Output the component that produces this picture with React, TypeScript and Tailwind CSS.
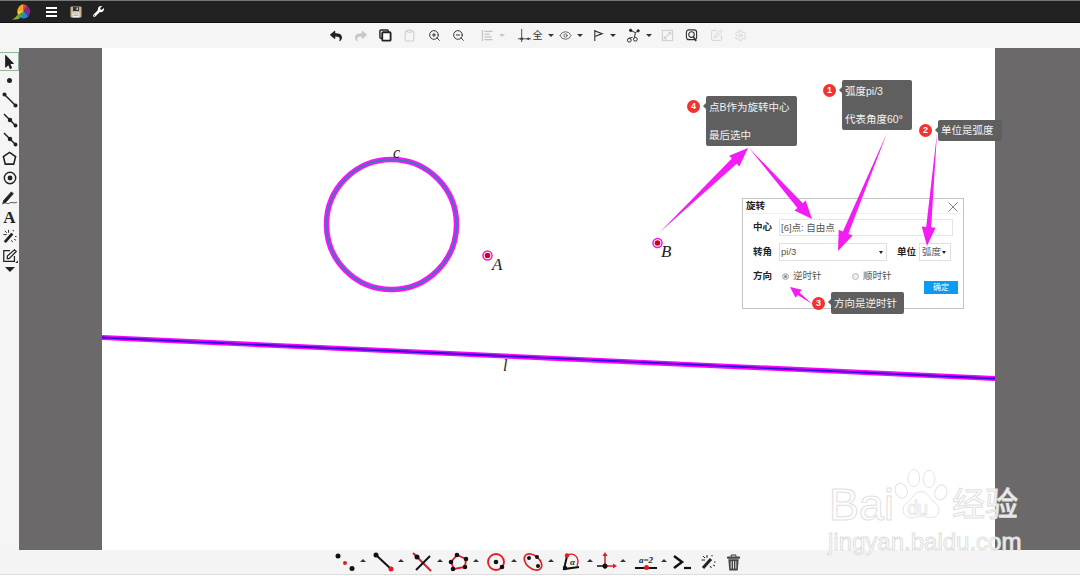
import React from "react";
import { FaReply, FaShare, FaWrench, FaMousePointer } from "react-icons/fa";
import { ZoomIn, ZoomOut, Eye, Settings, Clipboard, SquarePen } from "lucide-react";

const CJK = "font-['Liberation_Sans','Noto_Sans_CJK_SC',sans-serif]";
const MATH = "font-['Liberation_Serif',serif] italic";

function Caret({ tiny, color = "border-t-[#333]" }: { tiny?: boolean; color?: string }) {
  return (
    <span
      className={`inline-block w-0 h-0 border-x-[3px] border-x-transparent border-t-[3px] ${color} ${
        tiny ? "rotate-180" : ""
      }`}
    />
  );
}

// ---- top toolbar ----
const ic = "w-[13px] h-[13px]";

function CopyIcon() {
  return (
    <svg viewBox="0 0 14 14" className={ic}>
      <rect x="1" y="1" width="9" height="9" rx="1" fill="none" stroke="#222" strokeWidth="1.5" />
      <rect x="3.5" y="3.5" width="9" height="9" rx="1" fill="#fff" stroke="#222" strokeWidth="2" />
    </svg>
  );
}
function AlignIcon() {
  return (
    <svg viewBox="0 0 14 14" className={ic} stroke="#c4c4c4" strokeWidth="1.3">
      <path d="M1.5 1v12M3.5 2.5h9M3.5 5.500h6M3.5 8.500h8M3.500 11.500h9" fill="none" />
    </svg>
  );
}
function AxesIcon() {
  return (
    <svg viewBox="0 0 16 16" className="w-[15px] h-[15px]" stroke="#444" strokeWidth="1" fill="#444">
      <path d="M5 1v14M1 11.500h14" fill="none" />
      <circle cx="5" cy="11.500" r="1.200" />
      <circle cx="12" cy="11.500" r="0.900" />
    </svg>
  );
}
function FlagIcon() {
  return (
    <svg viewBox="0 0 14 14" className={ic} fill="none" stroke="#333" strokeWidth="1.2">
      <path d="M3 1v12M3 2l8 3-8 3" />
    </svg>
  );
}
function GraphIcon() {
  return (
    <svg viewBox="0 0 16 16" className="w-[15px] h-[15px]" fill="none" stroke="#222" strokeWidth="1">
      <path d="M5 2.500l5 2.500 3-2M10 5l-1 5M3 11l4-1" />
      <circle cx="5" cy="2.500" r="1.300" fill="#222" />
      <circle cx="13" cy="3" r="1.200" fill="#222" />
      <circle cx="3.500" cy="13" r="2" />
      <circle cx="10" cy="12" r="2" />
    </svg>
  );
}
function ExpandIcon() {
  return (
    <svg viewBox="0 0 14 14" className={ic} fill="none" stroke="#d0d0d0" strokeWidth="1.2">
      <rect x="1.500" y="1.500" width="11" height="11" />
      <path d="M4 10l6-6M7.500 3.500H10.500V6.500M3.500 7.500V10.500H6.500" />
    </svg>
  );
}
function CameraIcon() {
  return (
    <svg viewBox="0 0 14 14" className={ic} fill="none" stroke="#333" strokeWidth="1.200">
      <rect x="1.500" y="1" width="11" height="10.500" rx="2.500" />
      <circle cx="7" cy="6" r="3" />
      <path d="M9 8.500l3 4.500" strokeWidth="1.600" />
    </svg>
  );
}

type TopItem = { w: string; node: React.ReactNode; caret?: string };
const topItems: TopItem[] = [
  { w: "w-[24.5px]", node: <FaReply className="w-[12px] h-[12px] text-[#222]" /> },
  { w: "w-[24.5px]", node: <FaShare className="w-[12px] h-[12px] text-[#c8c8c8]" /> },
  { w: "w-[24.5px]", node: <CopyIcon /> },
  { w: "w-[24.5px]", node: <Clipboard className={`${ic} text-[#cfcfcf]`} strokeWidth={2} /> },
  { w: "w-[24.5px]", node: <ZoomIn className={`${ic} text-[#333]`} strokeWidth={1.8} /> },
  { w: "w-[24.5px]", node: <ZoomOut className={`${ic} text-[#333]`} strokeWidth={1.8} /> },
  { w: "w-[43px]", node: <AlignIcon />, caret: "border-t-[#c8c8c8]" },
  {
    w: "w-[42px]",
    node: (
      <span className="flex items-center">
        <AxesIcon />
        <span className={`${CJK} text-[10px] leading-none text-[#333] ml-[1px]`}>全</span>
      </span>
    ),
  },
  { w: "w-[30px]", node: <Eye className={`${ic} text-[#555]`} strokeWidth={1.6} />, caret: "border-t-[#333]" },
  { w: "w-[36px]", node: <FlagIcon />, caret: "border-t-[#333]" },
  { w: "w-[33px]", node: <GraphIcon />, caret: "border-t-[#333]" },
  { w: "w-[24.5px]", node: <ExpandIcon /> },
  { w: "w-[24.5px]", node: <CameraIcon /> },
  { w: "w-[24.5px]", node: <SquarePen className={`${ic} text-[#d0d0d0]`} strokeWidth={1.6} /> },
  { w: "w-[24.5px]", node: <Settings className={`${ic} text-[#d0d0d0]`} strokeWidth={1.6} /> },
];

// ---- left tools ----
function SegIcon() {
  return (
    <svg viewBox="0 0 16 16" className="w-[16px] h-[16px]" fill="#222" stroke="#222" strokeWidth="1.500">
      <path d="M2 2l12 12" />
      <circle cx="2.500" cy="2.500" r="1.300" />
      <circle cx="13.500" cy="13.500" r="1.300" />
    </svg>
  );
}
function SegMidIcon() {
  return (
    <svg viewBox="0 0 16 16" className="w-[16px] h-[16px]" fill="#222" stroke="#222" strokeWidth="1.500">
      <path d="M2 2l12 12" />
      <circle cx="8" cy="8" r="1.500" />
      <circle cx="13.500" cy="13.500" r="1.200" />
    </svg>
  );
}
function PentagonIcon({ className = "w-[15px] h-[15px]" }: { className?: string }) {
  return (
    <svg viewBox="0 0 16 16" className={className} fill="none" stroke="#222" strokeWidth="1.700">
      <path d="M8 1.500L14.500 6 12.500 14H3.500L1.500 6z" />
    </svg>
  );
}
function CircleDotIcon() {
  return (
    <svg viewBox="0 0 16 16" className="w-[14px] h-[14px]" fill="none" stroke="#222" strokeWidth="1.600">
      <circle cx="8" cy="8" r="6.500" />
      <circle cx="8" cy="8" r="2" fill="#222" />
    </svg>
  );
}
function PenIcon() {
  return (
    <svg viewBox="0 0 18 16" className="w-[17px] h-[15px]" fill="none" stroke="#222">
      <path d="M3 11L11 2l2 2-8 9-3 1z" fill="#222" />
      <path d="M1 15c4-3 6 1 8-1s5 1 8-1" strokeWidth="0.800" />
    </svg>
  );
}
function WandIcon({ className = "w-[15px] h-[15px]" }: { className?: string }) {
  return (
    <svg viewBox="0 0 16 16" className={className} stroke="#222" fill="none">
      <path d="M3 14L11 5" strokeWidth="3" />
      <path d="M7 1v3M1.500 6H5M3 2l2 2M12 1v1.500M14 8h1.500M10 12l1.500 2M13 11l2 1" strokeWidth="1" />
    </svg>
  );
}
function NoteIcon() {
  return (
    <svg viewBox="0 0 18 18" className="w-[16px] h-[16px]" fill="none" stroke="#222" strokeWidth="1.400">
      <path d="M9 3H2v12h12V9" />
      <path d="M6 12V9l8-7 2 2-8 8z" />
      <path d="M15 17l3-3v3z" fill="#222" stroke="none" />
    </svg>
  );
}

const leftTools: React.ReactNode[] = [
  <span className="w-[5px] h-[5px] rounded-full bg-[#222]" />,
  <SegIcon />,
  <SegMidIcon />,
  <SegMidIcon />,
  <PentagonIcon />,
  <CircleDotIcon />,
  <PenIcon />,
  <span className="font-['Liberation_Serif',serif] font-bold text-[17px] leading-none text-[#222]">A</span>,
  <WandIcon />,
  <NoteIcon />,
];

// ---- bottom tools ----
function B({ children }: { children: React.ReactNode }) {
  return (
    <svg viewBox="0 0 24 20" className="w-[24px] h-[20px]">
      {children}
    </svg>
  );
}
const RED = "#e01b24";
const K = "#111";
const bottomItems: { w: string; node: React.ReactNode; caret?: boolean }[] = [
  {
    w: "w-[38px]",
    caret: true,
    node: (
      <B>
        <circle cx="5" cy="4" r="2.500" fill={K} />
        <circle cx="12" cy="11" r="2" fill={RED} />
        <circle cx="19" cy="16.500" r="2.500" fill={K} />
      </B>
    ),
  },
  {
    w: "w-[39px]",
    caret: true,
    node: (
      <B>
        <path d="M5 3l15 14" stroke={K} strokeWidth="2" />
        <circle cx="5" cy="3" r="2.500" fill={K} />
        <circle cx="20" cy="17" r="2.500" fill={RED} />
      </B>
    ),
  },
  {
    w: "w-[36px]",
    caret: true,
    node: (
      <B>
        <path d="M3 1l18 18" stroke={RED} strokeWidth="2" />
        <path d="M20 4L6 18" stroke={K} strokeWidth="2" />
        <circle cx="7" cy="5" r="2.500" fill={K} />
      </B>
    ),
  },
  {
    w: "w-[38px]",
    caret: true,
    node: (
      <B>
        <path d="M11 3l9 4-1 8-11 2-3-7z" fill="none" stroke={RED} strokeWidth="1.800" />
        <circle cx="11" cy="3" r="2.300" fill={K} />
        <circle cx="20" cy="7" r="2.300" fill={K} />
        <circle cx="19" cy="15" r="2.300" fill={K} />
        <circle cx="7" cy="17" r="2.300" fill={K} />
        <circle cx="5" cy="10" r="2.300" fill={K} />
      </B>
    ),
  },
  {
    w: "w-[37px]",
    caret: true,
    node: (
      <B>
        <circle cx="12" cy="10" r="8" fill="none" stroke={RED} strokeWidth="1.800" />
        <circle cx="12" cy="10" r="2.300" fill={K} />
        <circle cx="18" cy="15" r="2.300" fill={K} />
      </B>
    ),
  },
  {
    w: "w-[39px]",
    caret: true,
    node: (
      <B>
        <ellipse cx="12" cy="10" rx="10" ry="6.500" transform="rotate(40 12 10)" fill="none" stroke={RED} strokeWidth="1.600" />
        <circle cx="8" cy="6" r="2" fill={K} />
        <circle cx="16" cy="5" r="2" fill={K} />
        <circle cx="17" cy="14" r="2" fill={K} />
      </B>
    ),
  },
  {
    w: "w-[33px]",
    caret: true,
    node: (
      <B>
        <path d="M7 4l-3 13 15-2" fill="none" stroke={K} strokeWidth="2" />
        <path d="M7 3c8-3 13 3 10 11" fill="none" stroke={RED} strokeWidth="1.300" />
        <circle cx="7" cy="3.500" r="2.200" fill={RED} />
        <circle cx="5" cy="16" r="2.200" fill={K} />
        <text x="10" y="13" fontSize="9" fontStyle="italic" fontWeight="bold" fontFamily="Liberation Serif, serif" fill="#222">
          α
        </text>
      </B>
    ),
  },
  {
    w: "w-[41px]",
    caret: true,
    node: (
      <B>
        <path d="M12 2v15M12 14h10" stroke={RED} strokeWidth="1.500" />
        <path d="M12 0l-2.500 4h5zM24 14l-4-2.500v5z" fill={RED} />
        <path d="M4 14h8" stroke={K} strokeWidth="1.500" />
        <circle cx="12" cy="14" r="2.500" fill={K} />
      </B>
    ),
  },
  {
    w: "w-[37px]",
    caret: true,
    node: (
      <span className="flex flex-col items-center w-[24px] relative">
        <span className="font-['Liberation_Serif',serif] italic font-bold text-[9px] leading-[9px] text-[#222]">a=2</span>
        <span className="mt-[2px] w-[22px] h-[2px] bg-[#111]" />
        <span className="absolute left-[9.500px] top-[9px] w-[5px] h-[5px] rounded-full bg-[#e01b24]" />
      </span>
    ),
  },
  {
    w: "w-[25px]",
    node: (
      <B>
        <path d="M3 4l8 6-8 6" fill="none" stroke={K} strokeWidth="2.500" />
        <path d="M13 16h7" stroke={K} strokeWidth="2.200" />
      </B>
    ),
  },
  {
    w: "w-[25px]",
    node: <WandIcon className="w-[16px] h-[16px]" />,
  },
  {
    w: "w-[25px]",
    node: (
      <svg viewBox="0 0 16 18" className="w-[15px] h-[17px]">
        <path d="M5.500 2.500V1h5v1.500" fill="none" stroke="#222" />
        <rect x="1" y="2.500" width="14" height="2.500" rx="1" fill="#444" />
        <path d="M2.500 5.500h11l-1 12h-9z" fill="#444" />
        <path d="M5.500 7.500v8M8 7.500v8M10.500 7.500v8" stroke="#eee" strokeWidth="1" />
      </svg>
    ),
  },
];

// ---- canvas ----
function arrowPoints(x1: number, y1: number, x2: number, y2: number, shaft: number, headLen: number, headW: number) {
  const d = Math.hypot(x2 - x1, y2 - y1);
  const ux = (x2 - x1) / d;
  const uy = (y2 - y1) / d;
  const nx = -uy;
  const ny = ux;
  const bx = x2 - ux * headLen;
  const by = y2 - uy * headLen;
  const p = (x: number, y: number) => `${x.toFixed(1)},${y.toFixed(1)}`;
  return [
    p(x1, y1),
    p(bx + (nx * shaft) / 2, by + (ny * shaft) / 2),
    p(bx + (nx * headW) / 2, by + (ny * headW) / 2),
    p(x2, y2),
    p(bx - (nx * headW) / 2, by - (ny * headW) / 2),
    p(bx - (nx * shaft) / 2, by - (ny * shaft) / 2),
  ].join(" ");
}

const arrows = [
  [660, 232, 748, 148, 7, 19, 15],
  [749, 148, 812, 219, 7, 18, 15],
  [887, 133, 838, 251, 6, 20, 15],
  [937, 133, 927, 246, 5, 19, 14],
  [812, 304, 790, 287, 3, 11, 10],
];

function Badge({ n, className }: { n: number; className: string }) {
  return (
    <span
      className={`absolute w-[13px] h-[13px] rounded-full bg-[#f5302f] text-white text-[9px] font-bold leading-[13px] text-center font-['Liberation_Sans',sans-serif] ${className}`}
    >
      {n}
    </span>
  );
}

function Callout({ className, children }: { className: string; children: React.ReactNode }) {
  return (
    <div className={`absolute rounded-[2px] bg-[#5f5f5f] text-[#f2f2f2] text-[10.500px] px-[3px] whitespace-nowrap ${CJK} ${className}`}>
      <span className="absolute left-[-3px] top-[7px] w-0 h-0 border-y-[3px] border-y-transparent border-r-[3px] border-r-[#5f5f5f]" />
      {children}
    </div>
  );
}

function Dialog() {
  const label = "w-[26px] font-bold text-[#222]";
  return (
    <div className={`absolute left-[640px] top-[150px] w-[222px] h-[111px] bg-white border border-[#c4c4c4] text-[9.500px] text-[#555] ${CJK}`}>
      <div className="flex items-center justify-between h-[15px] mx-[2px] border-b border-[#eef0f4] pl-[1px] pr-[3px] pt-[1px]">
        <span className="text-[#222] font-bold">旋转</span>
        <svg viewBox="0 0 10 10" className="w-[10px] h-[10px]" stroke="#666" strokeWidth="0.800">
          <path d="M0.500 0.500l9 9M9.500 0.500l-9 9" />
        </svg>
      </div>
      <div className="flex items-center h-[17px] mt-[5px] pl-[10px]">
        <span className={label}>中心</span>
        <span className="w-[174px] h-[17px] border border-[#e4e4e4] px-[1px] leading-[15px]">[6]点: 自由点</span>
      </div>
      <div className="flex items-center h-[18px] mt-[7px] pl-[10px]">
        <span className={label}>转角</span>
        <span className="w-[108px] h-[18px] border border-[#e0e0e0] px-[1px] flex items-center justify-between">
          pi/3
          <span className="mr-[2px] border-x-[2.500px] border-x-transparent border-t-[3px] border-t-[#222]" />
        </span>
        <span className={`${label} ml-[10px] mr-[-4px]`}>单位</span>
        <span className="w-[32px] h-[18px] border border-[#e0e0e0] px-[2px] flex items-center justify-between">
          弧度
          <span className="mr-[2px] border-x-[2.500px] border-x-transparent border-t-[3px] border-t-[#222]" />
        </span>
      </div>
      <div className="flex items-center h-[14px] mt-[8px] pl-[10px]">
        <span className={label}>方向</span>
        <span className="ml-[3px] w-[7px] h-[7px] rounded-full border border-[#bbb] bg-[#888] shadow-[inset_0_0_0_1px_#eee]" />
        <span className="ml-[4px] w-[59px]">逆时针</span>
        <span className="w-[7px] h-[7px] rounded-full border border-[#bbb] bg-[#eee]" />
        <span className="ml-[4px]">顺时针</span>
      </div>
      <div className="flex justify-end mt-[-2px] pr-[5px]">
        <span className="w-[34px] h-[13px] bg-[#0a9bf5] text-white text-[8px] leading-[13px] text-center">确定</span>
      </div>
    </div>
  );
}

function Canvas() {
  return (
    <div className="relative w-[893px] shrink-0 bg-white">
      <svg viewBox="102 48 893 502" className="absolute inset-0 w-[893px] h-[502px]">
        <path d="M102 337.500L995 378.500" stroke="#ff00ff" strokeWidth="5" />
        <path d="M102 337.500L995 378.500" stroke="#2a10d8" strokeWidth="1.800" />
        <circle cx="391.500" cy="224.500" r="65" fill="none" stroke="#ff10ff" strokeWidth="5.500" />
        <circle cx="391.500" cy="224.500" r="65" fill="none" stroke="#2f7fb5" strokeWidth="1.800" />
        <circle cx="487.500" cy="255.500" r="4.500" fill="#fff" stroke="#f015f0" strokeWidth="1.500" />
        <circle cx="487.500" cy="255.500" r="2.800" fill="#d00018" />
        <circle cx="657.500" cy="243" r="4.500" fill="#fff" stroke="#f015f0" strokeWidth="1.500" />
        <circle cx="657.500" cy="243" r="2.800" fill="#d00018" />
      </svg>
      <span className={`absolute left-[291px] top-[96px] text-[16px] leading-[18px] text-[#222] ${MATH}`}>c</span>
      <span className={`absolute left-[390px] top-[208px] text-[17px] leading-[18px] text-[#222] ${MATH}`}>A</span>
      <span className={`absolute left-[559px] top-[195px] text-[17px] leading-[18px] text-[#222] ${MATH}`}>B</span>
      <span className={`absolute left-[401px] top-[309px] text-[16px] leading-[18px] text-[#222] ${MATH}`}>l</span>

      <Dialog />

      <svg viewBox="102 48 893 502" className="absolute inset-0 w-[893px] h-[502px]">
        {arrows.map((a, i) => (
          <polygon key={i} points={arrowPoints(a[0], a[1], a[2], a[3], a[4], a[5], a[6])} fill="#f41cf4" />
        ))}
      </svg>

      <Badge n={4} className="left-[585px] top-[52px]" />
      <Callout className="left-[604px] top-[48px] w-[91px] h-[50px] flex flex-col justify-between py-[3px] leading-[16px]">
        <span>点B作为旋转中心</span>
        <span>最后选中</span>
      </Callout>
      <Badge n={1} className="left-[721px] top-[36px]" />
      <Callout className="left-[740px] top-[32px] w-[70px] h-[50px] flex flex-col justify-between py-[3px] leading-[16px]">
        <span>弧度pi/3</span>
        <span>代表角度60°</span>
      </Callout>
      <Badge n={2} className="left-[817px] top-[76px]" />
      <Callout className="left-[836px] top-[72px] w-[64px] h-[21px] leading-[21px]">单位是弧度</Callout>
      <Badge n={3} className="left-[710px] top-[249px]" />
      <Callout className="left-[729px] top-[244px] w-[73px] h-[22px] leading-[22px]">方向是逆时针</Callout>
    </div>
  );
}

function Watermark() {
  const outline = "text-white/90 [-webkit-text-stroke:1px_#e0e0e0] font-['Liberation_Sans','Noto_Sans_CJK_SC',sans-serif]";
  return (
    <div className="absolute left-[828px] top-[460px] w-[195px] h-[96px] pointer-events-none">
      <span className={`absolute left-[1px] top-[20px] text-[45px] leading-[50px] ${outline}`}>Bai</span>
      <svg viewBox="0 0 60 62" className="absolute left-[64px] top-[9px] w-[58px] h-[56px]" fill="#fff" stroke="#e0e0e0" strokeWidth="1">
        <ellipse cx="22" cy="10" rx="6.500" ry="9.500" />
        <ellipse cx="39" cy="11" rx="6.500" ry="9.500" />
        <ellipse cx="8" cy="24" rx="6.500" ry="8.500" transform="rotate(-20 8 24)" />
        <ellipse cx="52" cy="26" rx="6.500" ry="8.500" transform="rotate(20 52 26)" />
        <path d="M30 25c-8 0-9 8-15 12-8 5-6 17 5 17 4 0 6-2 10-2s7 2 11 2c10 0 12-12 4-17-6-4-7-12-15-12z" />
      </svg>
      <span className="absolute left-[79px] top-[37px] text-[20px] leading-[22px] tracking-[-1px] [-webkit-text-stroke:0.700px_#e0e0e0] text-white font-['Liberation_Sans',sans-serif]">du</span>
      <span className={`absolute left-[124px] top-[26px] text-[33px] leading-[38px] whitespace-nowrap ${outline}`}>经验</span>
      <span className={`absolute left-0 top-[69px] text-[24px] leading-[26px] whitespace-nowrap ${outline}`}>jingyan.baidu.com</span>
    </div>
  );
}

export default function App() {
  return (
    <div className="relative w-[1080px] h-[576px] overflow-hidden bg-white flex flex-col">
      <div className="h-[23px] bg-[#222222] border-t border-[#777] border-b border-b-[#111] flex items-center">
        <svg viewBox="0 0 22 20" className="ml-[11px] w-[20px] h-[18px]">
          <path d="M1 18c3-1 5-3 6-5l3 4c-3 1-6 2-9 1z" fill="#7cb342" />
          <path d="M7 9a7.500 7.500 0 0 1 7-7.500V9z" fill="#f5a623" />
          <path d="M14 1.500a7.500 7.500 0 0 1 4 1.500L14 9z" fill="#e53935" />
          <path d="M18 3a8 8 0 0 1 1 12L14 9z" fill="#7b2d8e" />
          <path d="M19 15a7.500 7.500 0 0 1-8 1.500L14 9z" fill="#1e88e5" />
          <path d="M11 16.500A7.500 7.500 0 0 1 7 9h7z" fill="#f2d21b" />
          <path d="M8 13l6-4-3 7.500z" fill="#43a047" />
        </svg>
        <div className="ml-[15px] w-[11px] flex flex-col gap-[2px]">
          <span className="h-[2px] bg-white" />
          <span className="h-[2px] bg-white" />
          <span className="h-[2px] bg-white" />
        </div>
        <svg viewBox="0 0 12 12" className="ml-[13px] w-[12px] h-[12px]">
          <rect x="0.500" y="0.500" width="11" height="11" rx="1" fill="#c9b48f" />
          <rect x="3" y="1" width="6" height="4" fill="#333" />
          <rect x="6.500" y="1.500" width="1.500" height="2.500" fill="#ccc" />
          <rect x="2.500" y="6.500" width="7" height="5" fill="#eee" />
          <path d="M3.500 8h5M3.500 9.500h5" stroke="#888" strokeWidth="0.600" />
        </svg>
        <FaWrench className="ml-[11px] w-[11px] h-[11px] text-white" />
      </div>

      <div className="h-[25px] bg-[#f5f5f5] flex items-center pl-[324px]">
        {topItems.map((t, i) => (
          <div key={i} className={`${t.w} flex items-center justify-center gap-[5px]`}>
            {t.node}
            {(t.caret || i === 7) && <Caret color={t.caret || "border-t-[#333]"} />}
          </div>
        ))}
      </div>

      <div className="flex h-[502px]">
        <div className="w-[19px] bg-[#f5f5f5] flex flex-col pt-[4px]">
          <div className="h-[19px] border border-[#8fb79a] border-l-0 flex items-center justify-center">
            <FaMousePointer className="w-[13px] h-[14px] text-[#222]" />
          </div>
          {leftTools.map((t, i) => (
            <div key={i} className="h-[19.500px] flex items-center justify-center">
              {t}
            </div>
          ))}
          <div className="flex justify-center mt-[1px]">
            <span className="w-0 h-0 border-x-[5px] border-x-transparent border-t-[5px] border-t-[#222]" />
          </div>
        </div>
        <div className="w-[83px] bg-[#6b696a]" />
        <Canvas />
        <div className="flex-1 bg-[#6b696a]" />
      </div>

      <div className="h-[25px] bg-[#f4f4f4] border-b border-[#ddd] flex items-center pl-[333px]">
        {bottomItems.map((b, i) => (
          <div key={i} className={`${b.w} shrink-0 flex items-center`}>
            <span className="w-[24px] flex justify-center">{b.node}</span>
            {b.caret && (
              <span className="ml-[3px] mb-[3px] flex">
                <Caret tiny color="border-t-[#333]" />
              </span>
            )}
          </div>
        ))}
      </div>

      <Watermark />
    </div>
  );
}
